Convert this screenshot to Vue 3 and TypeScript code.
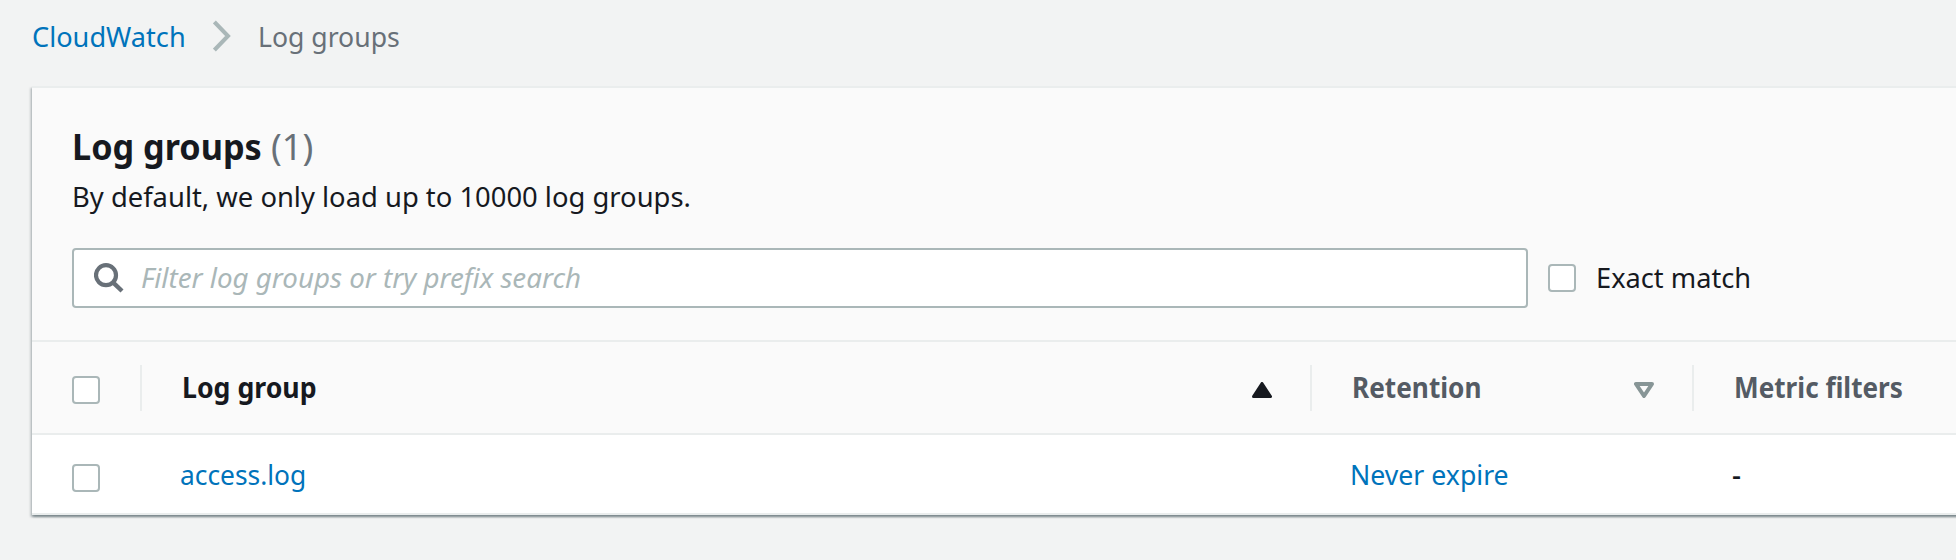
<script setup lang="ts">
import { ref } from 'vue'

interface LogGroup {
  name: string
  retention: string
  metricFilters: string
}

const groups = ref<LogGroup[]>([{ name: 'access.log', retention: 'Never expire', metricFilters: '-' }])
</script>

<template>
  <div class="page">
    <nav class="breadcrumb">
      <a class="crumb"><span class="t t-cloudwatch">CloudWatch</span></a>
      <svg class="chevron" width="20" height="32" viewBox="0 0 20 32">
        <path d="M1.4 2 L15 16 L1.4 30" fill="none" stroke="#aab7b8" stroke-width="4" />
      </svg>
      <span class="current"><span class="t t-crumb">Log groups</span></span>
    </nav>

    <main class="card">
      <header class="card-head">
        <h1 class="title">
          <span class="t t-title">Log groups</span>
          <span class="t count">({{ groups.length }})</span>
        </h1>
        <p class="desc"><span class="t t-desc">By default, we only load up to 10000 log groups.</span></p>
        <div class="filter">
          <div class="search">
            <svg class="glass" width="30" height="30" viewBox="0 0 30 30">
              <circle cx="12" cy="12.2" r="10" fill="none" stroke="#687078" stroke-width="4.2" />
              <path d="M19 19.3 L28 28" stroke="#687078" stroke-width="4.4" />
            </svg>
            <span class="t t-placeholder">Filter log groups or try prefix search</span>
          </div>
          <span class="box"></span>
          <span class="t t-exact">Exact match</span>
        </div>
      </header>

      <div class="row head">
        <div class="cell check"><span class="box"></span></div>
        <div class="cell sorted">
          <span class="t t-group">Log group</span>
          <svg class="arrow" width="20" height="16" viewBox="0 0 20 16">
            <path d="M10 1.5 L18.5 14.5 H1.5 Z" fill="#16191f" stroke="#16191f" stroke-width="3" stroke-linejoin="round" />
          </svg>
        </div>
        <div class="cell">
          <span class="t t-retention">Retention</span>
          <svg class="arrow" width="20" height="16" viewBox="0 0 20 16">
            <path d="M2 2 H18 L10 14 Z" fill="none" stroke="#879596" stroke-width="4" stroke-linejoin="round" />
          </svg>
        </div>
        <div class="cell"><span class="t t-metric">Metric filters</span></div>
      </div>

      <div v-for="g in groups" :key="g.name" class="row body">
        <div class="cell check"><span class="box"></span></div>
        <div class="cell"><a class="t t-name">{{ g.name }}</a></div>
        <div class="cell"><a class="t t-never">{{ g.retention }}</a></div>
        <div class="cell"><span class="t t-count">{{ g.metricFilters }}</span></div>
      </div>
    </main>
  </div>
</template>

<style>
html, body { margin: 0; background: #f2f3f3; overflow: hidden; }
</style>

<style scoped>
.page {
  box-sizing: border-box;
  height: 560px;
  padding: 18px 0 0 32px;
  overflow: hidden;
  background: #f2f3f3;
  color: #16191f;
  font: 400 28px/36px "Noto Sans", "Open Sans", sans-serif;
}
a { color: #0073bb; }

/* Text is drawn slightly condensed, anchored at its left edge. */
.t { display: inline-block; white-space: pre; transform-origin: 0 50%; }
.t-cloudwatch { transform: scaleX(.97); }
.t-crumb { transform: scaleX(.95); }
.t-title { transform: translate(0, 1px) scaleX(.951); }
.count { transform: translate(1px, 1px); }
.t-desc { transform: scaleX(.978); }
.t-placeholder { transform: translateY(-1px) scaleX(.99); }
.t-exact { transform: translateY(-1px) scaleX(.972); }
.t-group { transform: translate(2px, -1px) scaleX(.953); }
.t-retention { transform: translate(2px, -1px) scaleX(.936); }
.t-metric { transform: translate(2px, -1px) scaleX(.934); }
.t-name { transform: scaleX(.941); }
.t-never { transform: scaleX(.952); }
.t-count { font-weight: 500; }

.breadcrumb { display: flex; height: 36px; align-items: center; }
.crumb { width: 181px; }
.chevron { width: 20px; }
.current { margin-left: 24.5px; color: #687078; }

.card {
  margin-top: 32px;
  width: 1980px;
  border-top: 2px solid #eaeded;
  background: #fff;
  box-shadow: 0 2px 2px 0 rgba(0, 28, 36, .3), 2px 2px 2px 0 rgba(0, 28, 36, .15), -2px 2px 2px 0 rgba(0, 28, 36, .15);
}
.card-head {
  padding: 36px 40px 32px;
  background: #fafafa;
  border-bottom: 2px solid #eaeded;
}
.title { display: flex; margin: 0; font-size: 36px; line-height: 44px; font-weight: 700; }
.t-title { width: 198px; }
.count { font-weight: 400; color: #687078; }
.desc { margin: 10px 0 34px; }
.filter { display: flex; align-items: center; }
.search {
  box-sizing: border-box;
  display: flex;
  align-items: center;
  width: 1456px;
  height: 60px;
  margin-right: 20px;
  padding-left: 20px;
  border: 2px solid #aab7b8;
  border-radius: 4px;
  background: #fff;
  color: #aab7b8;
  font-style: italic;
}
.glass { margin-right: 17px; }
.box {
  box-sizing: border-box;
  flex: none;
  width: 28px;
  height: 28px;
  border: 2px solid #aab7b8;
  border-radius: 4px;
  background: #fff;
}
.t-exact { margin-left: 20px; }

.row { display: grid; grid-template-columns: 110px 1170px 382px 1fr; border-bottom: 2px solid #eaeded; }
.cell { display: flex; align-items: center; justify-content: space-between; padding: 0 38px; }
.check { padding: 0 0 0 40px; }
.head { height: 91px; align-items: center; background: #fafafa; color: #545b64; font-weight: 700; }
.head .cell { box-sizing: border-box; height: 46px; border-right: 2px solid #eaeded; }
.head .sorted { color: #16191f; }
.head .box, .arrow { margin-top: 5px; }
.body { height: 78px; }
.body .box { margin-top: 8px; }
</style>
